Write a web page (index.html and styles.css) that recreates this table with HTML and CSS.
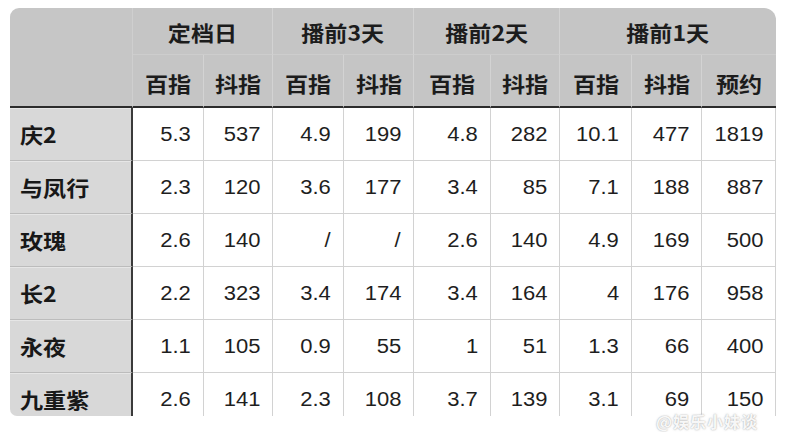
FILE: index.html
```html
<!DOCTYPE html>
<html lang="zh">
<head>
<meta charset="utf-8">
<link rel="stylesheet" href="styles.css">
</head>
<body>
<div class="page">
  <div class="sheet">
    <div class="grid">
      <div class="hd corner"></div>
      <div class="hd top span2"><span class="t">定档日</span></div>
      <div class="hd top span2"><span class="t">播前3天</span></div>
      <div class="hd top span2"><span class="t">播前2天</span></div>
      <div class="hd top span3 last"><span class="t">播前1天</span></div>

      <div class="hd sub"><span class="t">百指</span></div>
      <div class="hd sub"><span class="t">抖指</span></div>
      <div class="hd sub"><span class="t">百指</span></div>
      <div class="hd sub"><span class="t">抖指</span></div>
      <div class="hd sub"><span class="t">百指</span></div>
      <div class="hd sub"><span class="t">抖指</span></div>
      <div class="hd sub"><span class="t">百指</span></div>
      <div class="hd sub"><span class="t">抖指</span></div>
      <div class="hd sub last"><span class="t">预约</span></div>

      <div class="lb"><span class="t">庆2</span></div>
      <div class="nc"><span class="t">5.3</span></div><div class="nc"><span class="t">537</span></div>
      <div class="nc"><span class="t">4.9</span></div><div class="nc"><span class="t">199</span></div>
      <div class="nc"><span class="t">4.8</span></div><div class="nc"><span class="t">282</span></div>
      <div class="nc"><span class="t">10.1</span></div><div class="nc"><span class="t">477</span></div><div class="nc"><span class="t">1819</span></div>

      <div class="lb"><span class="t">与凤行</span></div>
      <div class="nc"><span class="t">2.3</span></div><div class="nc"><span class="t">120</span></div>
      <div class="nc"><span class="t">3.6</span></div><div class="nc"><span class="t">177</span></div>
      <div class="nc"><span class="t">3.4</span></div><div class="nc"><span class="t">85</span></div>
      <div class="nc"><span class="t">7.1</span></div><div class="nc"><span class="t">188</span></div><div class="nc"><span class="t">887</span></div>

      <div class="lb"><span class="t">玫瑰</span></div>
      <div class="nc"><span class="t">2.6</span></div><div class="nc"><span class="t">140</span></div>
      <div class="nc"><span class="t">/</span></div><div class="nc"><span class="t">/</span></div>
      <div class="nc"><span class="t">2.6</span></div><div class="nc"><span class="t">140</span></div>
      <div class="nc"><span class="t">4.9</span></div><div class="nc"><span class="t">169</span></div><div class="nc"><span class="t">500</span></div>

      <div class="lb"><span class="t">长2</span></div>
      <div class="nc"><span class="t">2.2</span></div><div class="nc"><span class="t">323</span></div>
      <div class="nc"><span class="t">3.4</span></div><div class="nc"><span class="t">174</span></div>
      <div class="nc"><span class="t">3.4</span></div><div class="nc"><span class="t">164</span></div>
      <div class="nc"><span class="t">4</span></div><div class="nc"><span class="t">176</span></div><div class="nc"><span class="t">958</span></div>

      <div class="lb"><span class="t">永夜</span></div>
      <div class="nc"><span class="t">1.1</span></div><div class="nc"><span class="t">105</span></div>
      <div class="nc"><span class="t">0.9</span></div><div class="nc"><span class="t">55</span></div>
      <div class="nc"><span class="t">1</span></div><div class="nc"><span class="t">51</span></div>
      <div class="nc"><span class="t">1.3</span></div><div class="nc"><span class="t">66</span></div><div class="nc"><span class="t">400</span></div>

      <div class="lb"><span class="t">九重紫</span></div>
      <div class="nc"><span class="t">2.6</span></div><div class="nc"><span class="t">141</span></div>
      <div class="nc"><span class="t">2.3</span></div><div class="nc"><span class="t">108</span></div>
      <div class="nc"><span class="t">3.7</span></div><div class="nc"><span class="t">139</span></div>
      <div class="nc"><span class="t">3.1</span></div><div class="nc"><span class="t">69</span></div><div class="nc"><span class="t">150</span></div>
    </div>
  </div>
  <div class="watermark">@娱乐小妹谈</div>
</div>
</body>
</html>
```

FILE: styles.css
```css
html, body {
  margin: 0;
  padding: 0;
  background: #ffffff;
}

.page {
  position: relative;
  width: 796px;
  height: 432px;
  padding: 8px 0 0 10px;
  box-sizing: border-box;
  font-family: "Liberation Sans", "Noto Sans CJK SC", sans-serif;
}

.sheet {
  width: 766px;
  height: 408px;
  overflow: hidden;
  border-radius: 9px 12px 0 7px;
  background: #ffffff;
}

.grid {
  display: grid;
  grid-template-columns: 123px 71px 69px 71px 70px 77px 69px 72px 70px 74px;
  grid-template-rows: 47px 53px;
  grid-auto-rows: 53px;
}

.hd {
  background: #c5c5c5;
  display: flex;
  align-items: center;
  justify-content: center;
  box-sizing: border-box;
  border-right: 1px solid #d3d3d3;
  font-family: "Noto Sans CJK SC", sans-serif;
  font-weight: 700;
  font-size: 21px;
  color: #1c1c1c;
}

.hd .t {
  display: inline-block;
  transform: scaleX(1.1);
  transform-origin: center;
}

.corner {
  grid-row: 1 / span 2;
  border-right: 1px solid #cfcfcf;
  border-bottom: 2px solid #2c2c2c;
  background: #c6c6c6;
}

.top {
  border-bottom: 1px solid #cdcdcd;
  padding-top: 2px;
}

.span2 { grid-column: span 2; }
.span3 { grid-column: span 3; }

.sub {
  border-bottom: 2px solid #2c2c2c;
  padding-top: 4px;
}

.last { border-right: none; }

.lb {
  background: #d8d8d8;
  box-sizing: border-box;
  border-right: 2px solid #3a3a3a;
  border-bottom: 1px solid #bcbcbc;
  box-shadow: inset 0 1px 0 #e6e6e6;
  display: flex;
  align-items: center;
  padding-left: 10px;
  font-family: "Noto Sans CJK SC", sans-serif;
  font-weight: 700;
  font-size: 21px;
  color: #181818;
}

.lb .t {
  display: inline-block;
  transform: scaleX(1.1);
  transform-origin: left center;
}

.nc {
  background: #ffffff;
  box-sizing: border-box;
  border-right: 1px solid #d2d2d2;
  border-bottom: 1px solid #d2d2d2;
  display: flex;
  align-items: center;
  justify-content: flex-end;
  padding-right: 12px;
  font-size: 20px;
  line-height: 20px;
  color: #1e1e1e;
}

.nc .t {
  display: inline-block;
  transform: scaleX(1.1);
  transform-origin: right center;
}

.watermark {
  position: absolute;
  left: 656px;
  top: 412px;
  font-family: "Noto Sans CJK SC", sans-serif;
  font-weight: 700;
  font-size: 16px;
  line-height: 18px;
  letter-spacing: 1px;
  color: rgba(255, 255, 255, 0.92);
  text-shadow: 0 0 2px rgba(120, 120, 120, 0.5), 0 0 1px rgba(150, 150, 150, 0.45);
}
```
